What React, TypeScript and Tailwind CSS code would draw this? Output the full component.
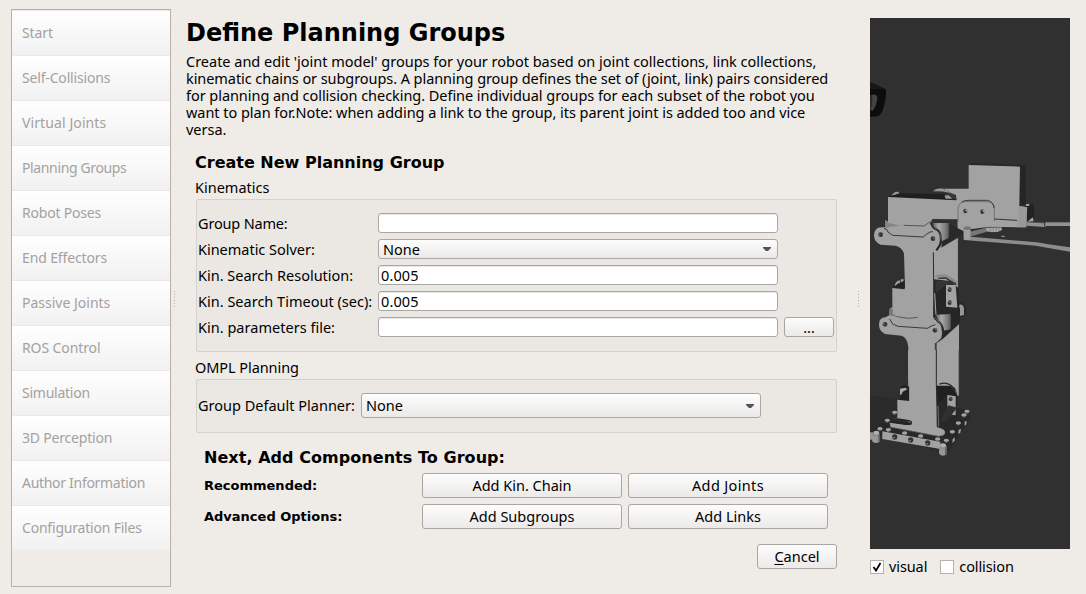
import React from "react";

const steps: [string, string][] = [
  ["Start", "tracking-[-0.1px]"],
  ["Self-Collisions", "tracking-[-0.17px]"],
  ["Virtual Joints", "tracking-[0.1px]"],
  ["Planning Groups", "tracking-[-0.37px]"],
  ["Robot Poses", "tracking-[-0.2px]"],
  ["End Effectors", "tracking-[-0.13px]"],
  ["Passive Joints", "tracking-[0px]"],
  ["ROS Control", "tracking-[-0.1px]"],
  ["Simulation", "tracking-[-0.25px]"],
  ["3D Perception", "tracking-[-0.2px]"],
  ["Author Information", "tracking-[-0.3px]"],
  ["Configuration Files", "tracking-[-0.2px]"],
];

const description: [string, string][] = [
  ["Create and edit 'joint model' groups for your robot based on joint collections, link collections,", "tracking-[-0.01px]"],
  ["kinematic chains or subgroups. A planning group defines the set of (joint, link) pairs considered", "tracking-[-0.065px]"],
  ["for planning and collision checking. Define individual groups for each subset of the robot you", "tracking-[-0.05px]"],
  ["want to plan for.Note: when adding a link to the group, its parent joint is added too and vice", "tracking-[-0.04px]"],
  ["versa.", "tracking-[0px]"],
];

const raised =
  "border border-[#a9a7a4] rounded-[3px] bg-linear-to-b from-[#fdfdfd] to-[#ebeae8]";
const frame = "ml-2.5 w-[641px] border border-[#d5d2cd] rounded-[2px] bg-[#ebe8e3]";
const dejavu = "font-['DejaVu_Sans',sans-serif] font-bold";

function Field({ value = "" }: { value?: string }) {
  return (
    <div className="flex h-5 w-[400px] items-center rounded-[3px] border border-[#a9a7a4] bg-white pl-[2px] shadow-[inset_0_1px_0_#e8e8e8]">
      <span className="tracking-[0.1px]">{value}</span>
    </div>
  );
}

function Combo({ tall = false }: { tall?: boolean }) {
  return (
    <div className={`flex w-[400px] items-center justify-between pl-[4px] pr-[6px] ${raised} ${tall ? "h-[25px]" : "h-5"}`}>
      <span>None</span>
      <svg width="8" height="4" viewBox="0 0 8 4">
        <path d="M0 0H8V1L5 4H3L0 1Z" fill="#555" />
      </svg>
    </div>
  );
}

function Row({ label, track, children }: { label: string; track: string; children: React.ReactNode }) {
  return (
    <div className="flex h-5 items-center">
      <span className={`w-[180px] whitespace-nowrap ${track}`}>{label}</span>
      {children}
    </div>
  );
}

function Button({ label, className }: { label: React.ReactNode; className: string }) {
  return <button className={`flex items-center justify-center ${raised} ${className}`}>{label}</button>;
}

function Grip() {
  return (
    <div className="flex w-[3px] flex-col gap-[2px] pt-[291px]">
      {[0, 1, 2, 3, 4, 5].map((i) => (
        <div key={i} className="size-px bg-[#b5b2ae]" />
      ))}
    </div>
  );
}

function Robot() {
  const light = "#a2a2a2";
  const dark = "#303030";
  const ink = "#242424";
  return (
    <svg width="200" height="531" viewBox="870 18 200 531" className="block bg-[#303030]">
      <g transform="translate(860 60) scale(.33333)">
        <path d="M30 66L76 87Q80 92 77 115Q70 160 55 169L30 170Z" fill="#0c0c0c" />
        <path d="M30 66L76 87H30Z" fill="#171717" />
        <path d="M34 104H47Q54 108 51 122Q47 142 37 153L30 148Q39 130 34 104Z" fill="#424242" />
        <path d="M30 105H35Q39 125 33 145L30 148Z" fill="#2b2b2b" />
        <path d="M326 315L480 320L497 314L340 309Z" fill="#292929" />
        <path d="M478 320L497 315V430L478 440Z" fill="#252525" />
        <path d="M94 406L105 396L116 395L119 404Z" fill="#989898" />
        <path d="M84 411L119 400L250 402L290 417V425Z" fill="#1f1f1f" />
        <path d="M219 394Q228 383 252 386L326 386V315L480 320L478 438L502 442L499 502L390 500L293 512V478L218 477L200 500L76 500V480L84 485V411L290 421L288 405Q260 392 219 394Z" fill={light} />
        <path d="M222 393Q267 390 286 418M243 386Q278 394 287 418" fill="none" stroke="#555" strokeWidth="2" strokeDasharray="7 2" />
        <path d="M252 405L266 404L281 417L256 418Z" fill="#999" stroke={ink} strokeWidth="3" />
        <path d="M76 480L84 488L135 501H76Z" fill="#858585" />
        <path d="M499 431L522 432V478L510 486L501 481Z" fill="#222" />
        <path d="M498 433L508 431V437L498 438ZM502 486L518 472L521 483Z" fill="#aaa" />
        <path d="M294 490V446Q296 427 315 425H383Q402 427 403 445V484" fill={light} stroke="#6a6a6a" strokeWidth="2.5" />
        <path d="M305 426Q313 421 326 421H383Q401 426 402 444" fill="none" stroke="#262626" strokeWidth="2.5" />
        <path d="M293 486H400V498H324L311 503V514H294Z" fill={light} />
        <ellipse cx="316" cy="453" rx="6" ry="7" fill="#333" />
        <ellipse cx="367" cy="455" rx="6" ry="7" fill="#333" />
        <path d="M317 446L322 451L319 455L316 453ZM366 448L373 452L370 458Z" fill="#aaa" />
        <path d="M403 477L471 481" stroke="#333" strokeWidth="3" />
        <path d="M476 439L502 442L497 502H470L475 475Z" fill="#9a9a9a" />
        <path d="M390 487H472V500H390Z" fill={light} />
        <path d="M499 486L555 489L560 486H630V498H560L554 501L499 497Z" fill="#929292" />
        <path d="M502 486L554 489M560 487H630" stroke="#555" strokeWidth="2" />
        <path d="M554 489V500" stroke="#333" strokeWidth="3" />
        <path d="M329 515L380 503L424 502V512L402 517L380 515L330 530Z" fill="#777" />
        <path d="M379 503H425V510L412 516H392L379 512Z" fill="#a8a8a8" />
        <path d="M391 503V515M400 503V515M409 503V514M417 503V512" stroke="#777" strokeWidth="2" />
        <path d="M310 503H330L332 530L530 547L580 555L630 562V575L578 566L527 557L311 540Z" fill="#8d8d8d" />
        <path d="M310 510H332L329 540H313Z" fill="#a1a1a1" />
        <ellipse cx="322" cy="504" rx="11" ry="5" fill="#777" />
        <path d="M424 529H434" stroke="#aaa" strokeWidth="3" />
      </g>
      <defs>
        <linearGradient id="barrel">
          <stop stopColor="#606060" />
          <stop offset=".35" stopColor="#a8a8a8" />
          <stop offset=".8" stopColor="#777" />
          <stop offset="1" stopColor="#444" />
        </linearGradient>
      </defs>
      <g transform="translate(860 220) scale(.33333)">
        <path d="M218 9H269V55Q263 66 242 63Z" fill="url(#barrel)" />
        <path d="M268 12L310 33V42L245 83L242 65L267 53Z" fill="#292929" />
        <path d="M221 90L246 82L294 53V205L220 180Z" fill={light} />
        <path d="M295 54V200" stroke="#3c3c3c" strokeWidth="2" />
        <path d="M42 46Q43 23 63 22H82L131 16L189 18L214 4L218 16L240 32L245 79L236 93L221 98V296L242 310L248 350L228 369V480H145V382Q142 353 125 347L75 342Q56 332 57 312Q58 292 76 292L88 286L89 266L97 262V204H135L132 101Q126 81 106 77L62 74Q43 68 42 46Z" fill={light} />
        <path d="M131 16L192 18L211 5" fill="none" stroke="#303030" strokeWidth="2" />
        <path d="M72 25Q84 28 84 36L98 46L190 51L199 43Q211 33 219 35" fill="none" stroke={ink} strokeWidth="2.5" />
        <path d="M213 7Q214 22 235 32Q247 47 240 75L229 91" fill="none" stroke={ink} strokeWidth="6" />
        <path d="M216 14L242 45L240 62" fill="none" stroke="#707070" strokeWidth="2" />
        <path d="M220 97L221 190V290" fill="none" stroke="#2b2b2b" strokeWidth="3" />
        <circle cx="62" cy="44" r="7" fill="#333" />
        <path d="M55 41L61 45L60 49Z" fill="#777" />
        <circle cx="219" cy="56" r="7" fill="#333" />
        <path d="M218 50L224 54L223 59Z" fill="#888" />
        <path d="M97 204L118 184L134 181V208Z" fill="#242424" />
        <path d="M105 198Q104 182 130 176L131 183L113 191Z" fill="#a0a0a0" />
        <path d="M119 178L122 187" stroke="#222" strokeWidth="3" />
        <path d="M89 266L99 267L98 281L114 291L88 286Z" fill="#777" />
        <path d="M110 290L145 295L173 292" fill="none" stroke="#303030" strokeWidth="2" />
        <path d="M222 178L270 183L296 205L298 263L273 284L229 285Z" fill="#262626" />
        <path d="M226 182L273 184L288 193L257 196L227 218Z" fill="#343434" />
        <path d="M258 195H287L292 263L258 260Z" fill={light} />
        <path d="M231 173Q257 163 291 191M226 169Q256 156 291 187" fill="none" stroke="#555" strokeWidth="2" strokeDasharray="6 2" />
        <path d="M235 175L257 174L289 194" fill="none" stroke="#303030" strokeWidth="4" />
        <ellipse cx="269" cy="209" rx="6" ry="7" fill="#303030" />
        <ellipse cx="269" cy="248" rx="6" ry="7" fill="#303030" />
        <path d="M264 205L275 210M264 244L275 249" stroke="#999" strokeWidth="2" />
        <path d="M224 220L228 284" stroke="#ababab" strokeWidth="3" />
        <path d="M298 247Q319 250 319 273Q320 288 303 292" fill="#252525" />
        <path d="M298 254Q311 252 312 267V285L298 288Z" fill="#969696" />
        <path d="M298 263V276" stroke="#252525" strokeWidth="3" />
        <path d="M228 284L274 282V328L249 333L233 300Z" fill="url(#barrel)" />
        <path d="M273 282L300 265V305L248 356L249 333L273 328Z" fill="#252525" />
        <path d="M89 297L98 312L114 319L202 325L216 317L226 314" fill="none" stroke={ink} strokeWidth="2.5" />
        <path d="M222 287L233 304Q249 312 250 337L247 354" fill="none" stroke="#292929" strokeWidth="6" />
        <path d="M224 291L245 318" stroke="#757575" strokeWidth="2" />
        <circle cx="75" cy="313" r="7" fill="#333" />
        <circle cx="225" cy="331" r="7" fill="#333" />
        <path d="M68 309L75 314M224 325L231 331" stroke="#888" strokeWidth="3" />
        <path d="M230 370L249 356L297 313V520H229Z" fill={light} />
        <path d="M226 369V490" stroke="#292929" strokeWidth="3" />
        <path d="M229 369V480" stroke="#626262" strokeWidth="2" />
      </g>
      <g transform="translate(860 350) scale(.33333)">
        <path d="M30 136L120 147V190L30 260Z" fill="#2b2b2b" />
        <path d="M144 0H297V137L286 137L270 104L228 107L230 240H145Z" fill={light} />
        <path d="M297 0V137" stroke="#444" strokeWidth="2" />
        <path d="M120 112L133 105L148 110V153H112L120 145Z" fill="#222" />
        <path d="M120 116L136 113L142 118L128 125L124 134H120Z" fill="#aaa" />
        <path d="M229 107L285 113L293 137L292 174L328 181L331 205L263 309L30 250L79 207L144 216L230 235Z" fill="#282828" />
        <path d="M230 107L275 107Q290 120 291 139L261 135L229 165Z" fill="#202020" />
        <path d="M234 105Q270 88 292 136" fill="none" stroke="#888" strokeWidth="2" strokeDasharray="8 2" />
        <path d="M239 102Q267 92 284 119" fill="none" stroke="#292929" strokeWidth="4" />
        <path d="M262 135L287 139V196L262 192Z" fill={light} />
        <circle cx="272" cy="147" r="6" fill="#303030" />
        <circle cx="272" cy="183" r="6" fill="#303030" />
        <path d="M268 144L277 148M268 180L277 185" stroke="#888" strokeWidth="2" />
        <path d="M112 149L148 153V110L228 107L230 231L246 236Q258 241 254 252Q249 260 234 258L92 231L89 217L145 225L155 221L150 213L112 207Z" fill={light} />
        <path d="M112 207L142 211Q158 213 153 222L138 223L90 216" fill="none" stroke="#222" strokeWidth="4" />
        <path d="M229 0V108L234 168L235 231" fill="none" stroke="#282828" strokeWidth="3" />
        <path d="M234 168L236 230" stroke="#949494" strokeWidth="2" />
        <path d="M89 231L235 259L253 254" fill="none" stroke="#686868" strokeWidth="2" />
        <path d="M67 244L241 275V297L67 267Z" fill={light} />
        {[[60, 236], [85, 239], [134, 249], [182, 258], [233, 267], [259, 271], [277, 245], [295, 219], [312, 195], [321, 184], [82, 211], [104, 187]].map(([x, y]) => (
          <g key={`${x}-${y}`}>
            <ellipse cx={x} cy={y} rx="8" ry="5" fill="#a4a4a4" />
            <path d={`M${x - 5} ${y + 4}L${x} ${y + 8}L${x + 5} ${y + 3}`} fill="#777" />
          </g>
        ))}
        {[[104, 261], [152, 270], [203, 279]].map(([x, y]) => (
          <g key={x}>
            <circle cx={x} cy={y} r="8" fill="#333" />
            <path d={`M${x - 7} ${y + 2}L${x + 1} ${y + 3}`} stroke="#858585" strokeWidth="3" />
          </g>
        ))}
        <path d="M278 268L284 262L284 272L277 279ZM296 240L303 236L301 248L295 252ZM314 215L320 212L319 223L314 228Z" fill="#a6a6a6" />
        <path d="M30 247H39V269H30Z" fill="#969696" />
        <path d="M37 252H60V273Q58 279 48 279Q37 279 36 271ZM238 289H260V311Q257 317 247 317Q238 316 237 309Z" fill="#989898" />
        <path d="M55 252H60V274L55 278ZM255 288H260V312L255 315Z" fill="#606060" />
        <ellipse cx="49" cy="248" rx="9" ry="6" fill="#b0b0b0" />
        <ellipse cx="249" cy="286" rx="9" ry="6" fill="#b0b0b0" />
        <path d="M38 255Q48 259 60 254M239 293Q249 297 260 292" stroke="#777" strokeWidth="2" fill="none" />
        <path d="M265 166L292 173L259 213L238 216Z" fill={dark} />
      </g>
    </svg>
  );
}

function Check({ label, checked = false, track }: { label: string; checked?: boolean; track: string }) {
  return (
    <label className="flex items-center gap-[5px]">
      <span className="flex size-[14px] items-center justify-center border border-[#b5b2ae] bg-white">
        {checked && (
          <svg width="10" height="10" viewBox="0 0 10 10">
            <path d="M1.5 5L4 8.5L8.5 1" fill="none" stroke="#000" strokeWidth="1.8" />
          </svg>
        )}
      </span>
      <span className={track}>{label}</span>
    </label>
  );
}

export default function App() {
  return (
    <div className="flex h-[594px] w-[1086px] overflow-hidden bg-[#efebe7] font-['Noto_Sans','Open_Sans',sans-serif] text-[14.5px] leading-[17px] text-black">
      <nav className="mt-[9px] ml-[11px] h-[578px] w-[160px] shrink-0 border border-[#b5b2ae] text-[14px] text-[#a4a19f]">
        {steps.map(([name, track]) => (
          <div key={name} className="flex h-[45px] items-center border-t border-[#ebe9e6] bg-linear-to-b from-white to-[#f1f1f1] pb-[2px] pl-[10px]">
            <span className={`whitespace-nowrap ${track}`}>{name}</span>
          </div>
        ))}
      </nav>
      <div className="ml-[3px] flex shrink-0"><Grip /></div>
      <main className="ml-[9px] flex w-[651px] shrink-0 flex-col">
        <h1 className={`mt-[18px] h-[35px] text-[24px] leading-[30px] ${dejavu}`}>Define Planning Groups</h1>
        <p className="h-[85px] whitespace-nowrap">
          {description.map(([line, track]) => (
            <React.Fragment key={line}>
              <span className={track}>{line}</span>
              <br />
            </React.Fragment>
          ))}
        </p>
        <h2 className={`mt-[15px] ml-[9px] h-5 text-[16px] leading-5 ${dejavu}`}>Create New Planning Group</h2>
        <div className="mt-[6px] ml-[9px] h-5 tracking-[0px]">Kinematics</div>
        <section className={`flex h-[153px] flex-col gap-[6px] pt-[13px] pl-px ${frame}`}>
          <Row label="Group Name:" track="tracking-[-0.17px]"><Field /></Row>
          <Row label="Kinematic Solver:" track="tracking-[-0.02px]"><Combo /></Row>
          <Row label="Kin. Search Resolution:" track="tracking-[0px]"><Field value="0.005" /></Row>
          <Row label="Kin. Search Timeout (sec):" track="tracking-[0.01px]"><Field value="0.005" /></Row>
          <Row label="Kin. parameters file:" track="tracking-[0.02px]">
            <Field />
            <Button label="..." className="ml-[6px] h-5 w-[50px]" />
          </Row>
        </section>
        <div className="mt-[7px] ml-[9px] h-5 tracking-[-0.07px]">OMPL Planning</div>
        <section className={`flex h-[54px] items-start pt-[13px] pl-px ${frame}`}>
          <span className="mt-[4px] w-[163px] tracking-[0px] whitespace-nowrap">Group Default Planner:</span>
          <Combo tall />
        </section>
        <h2 className={`mt-[15px] ml-[18px] h-5 text-[16px] leading-5 tracking-[0.05px] ${dejavu}`}>Next, Add Components To Group:</h2>
        <div className="mt-[5px] ml-[18px] grid grid-cols-[212px_200px_200px] gap-x-[6px] gap-y-[6px]">
          <div className={`flex items-center text-[13px] ${dejavu}`}>Recommended:</div>
          <Button label="Add Kin. Chain" className="h-[25px]" />
          <Button label="Add Joints" className="h-[25px] tracking-[0.35px]" />
          <div className={`flex items-center text-[13px] ${dejavu}`}>Advanced Options:</div>
          <Button label="Add Subgroups" className="h-[25px]" />
          <Button label="Add Links" className="h-[25px]" />
        </div>
        <div className="mt-[15px] flex justify-end">
          <Button label={<span><u className="underline-offset-2">C</u>ancel</span>} className="h-[25px] w-[80px]" />
        </div>
      </main>
      <div className="ml-[21px] flex shrink-0"><Grip /></div>
      <aside className="mt-[18px] ml-[9px] w-[200px] shrink-0">
        <Robot />
        <div className="mt-[9px] flex gap-[13px]">
          <Check label="visual" checked track="tracking-[-0.1px]" />
          <Check label="collision" track="tracking-[-0.1px]" />
        </div>
      </aside>
    </div>
  );
}
